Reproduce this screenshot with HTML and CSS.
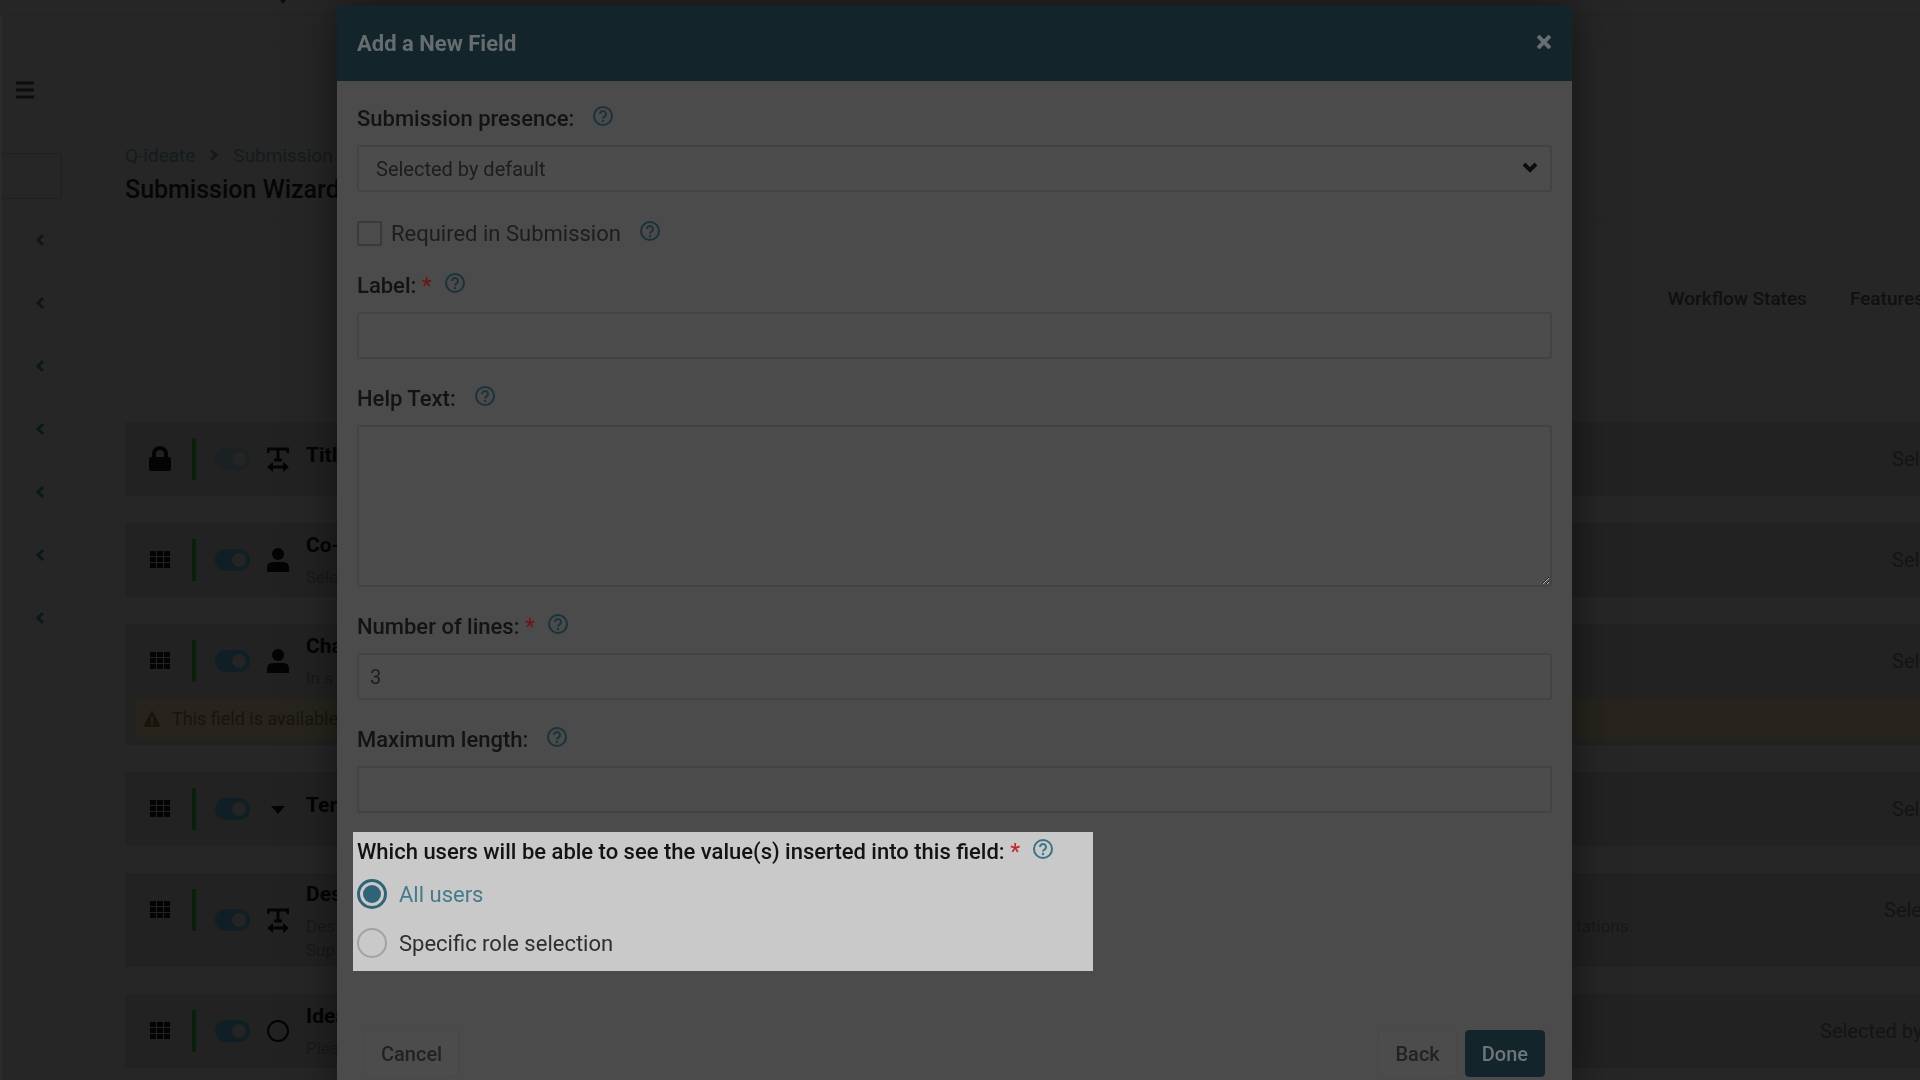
FILE: index.html
```html
<!DOCTYPE html>
<html lang="en">
  <head>
    <meta charset="UTF-8" />
    <meta name="viewport" content="width=device-width, initial-scale=1.0" />
    <link rel="stylesheet" href="styles.css">
    <title>Submission Wizard</title>
  </head>
  <body>
    <!-- shared icons -->
    <svg class="sprite" aria-hidden="true">
      <symbol id="help" viewBox="0 0 22 22">
        <circle cx="11" cy="11" r="9" fill="none" stroke="currentColor" stroke-width="2" />
        <path d="M8 9a3 3 0 1 1 4.500 2.600c-1 .6-1.500 1-1.500 2" fill="none" stroke="currentColor" stroke-width="2" />
        <circle cx="11" cy="16" r="1.200" fill="currentColor" />
      </symbol>
      <symbol id="chevron-left" viewBox="0 0 10 14">
        <path d="M8 2 3 7l5 5" fill="none" stroke="currentColor" stroke-width="3" />
      </symbol>
      <symbol id="grid" viewBox="0 0 22 20">
        <path d="M1 1h6v5H1zM8 1h6v5H8zM15 1h6v5h-6zM1 7h6v5H1zM8 7h6v5H8zM15 7h6v5h-6zM1 13h6v5H1zM8 13h6v5H8zM15 13h6v5h-6z" fill="currentColor" />
      </symbol>
      <symbol id="user" viewBox="0 0 22 26">
        <circle cx="11" cy="7" r="6" fill="currentColor" />
        <path d="M0 25v-4q0-6 6-6h10q6 0 6 6v4z" fill="currentColor" />
      </symbol>
      <symbol id="text-width" viewBox="0 0 22 24">
        <path d="M1 6V2h20v4M11 2v11M7 13h8M4 20h14" fill="none" stroke="currentColor" stroke-width="3" />
        <path d="M0 20l6-5v10zM22 20l-6-5v10z" fill="currentColor" />
      </symbol>
      <symbol id="lock" viewBox="0 0 22 26">
        <path d="M5 12V8a6 6 0 0 1 12 0v4" fill="none" stroke="currentColor" stroke-width="4" />
        <rect y="11" width="22" height="14" rx="2" fill="currentColor" />
      </symbol>
    </svg>

    <header class="topbar">
      <svg class="topbar-caret" viewBox="0 0 8 4"><path d="M1 0h6L4 4z" fill="currentColor" /></svg>
    </header>

    <div class="page">
      <aside class="sidebar">
        <button class="menu-button" aria-label="Menu">
          <svg width="18" height="18" viewBox="0 0 18 18"><path d="M0 2h18M0 9h18M0 16h18" stroke="currentColor" stroke-width="3" /></svg>
        </button>
        <input class="side-search" type="search" aria-label="Search" />
        <nav class="side-nav">
          <a href="#" aria-label="Expand"><svg><use href="#chevron-left" /></svg></a>
          <a href="#" aria-label="Expand"><svg><use href="#chevron-left" /></svg></a>
          <a href="#" aria-label="Expand"><svg><use href="#chevron-left" /></svg></a>
          <a href="#" aria-label="Expand"><svg><use href="#chevron-left" /></svg></a>
          <a href="#" aria-label="Expand"><svg><use href="#chevron-left" /></svg></a>
          <a href="#" aria-label="Expand"><svg><use href="#chevron-left" /></svg></a>
          <a href="#" aria-label="Expand"><svg><use href="#chevron-left" /></svg></a>
        </nav>
      </aside>

      <main class="content">
        <div class="breadcrumb">
          <a href="#">Q-ideate</a>
          <svg width="10" height="14" viewBox="0 0 10 14"><path d="M2 2l5 5-5 5" fill="none" stroke="currentColor" stroke-width="3" /></svg>
          <a href="#">Submission</a>
        </div>
        <h1>Submission Wizard</h1>
        <nav class="tabs">
          <a href="#">Workflow States</a>
          <a href="#">Features</a>
        </nav>

        <section class="card">
          <div class="row">
            <svg class="handle lock"><use href="#lock" /></svg>
            <span class="bar"></span>
            <span class="toggle off"></span>
            <svg class="type"><use href="#text-width" /></svg>
            <div class="info single"><h2>Title</h2></div>
            <span class="state">Selected</span>
          </div>
        </section>

        <section class="card">
          <div class="row">
            <svg class="handle"><use href="#grid" /></svg>
            <span class="bar"></span>
            <span class="toggle"></span>
            <svg class="type"><use href="#user" /></svg>
            <div class="info"><h2>Co-</h2><p>Sele</p></div>
            <span class="state">Selected</span>
          </div>
        </section>

        <section class="card">
          <div class="row">
            <svg class="handle"><use href="#grid" /></svg>
            <span class="bar"></span>
            <span class="toggle"></span>
            <svg class="type"><use href="#user" /></svg>
            <div class="info"><h2>Cha</h2><p>In s</p></div>
            <span class="state">Selected</span>
          </div>
          <div class="warning">
            <svg width="18" height="17" viewBox="0 0 18 17"><path fill-rule="evenodd" d="M9 0l9 17H0zM8 6v6h2V6zM8 13v2h2v-2z" fill="currentColor" /></svg>
            This field is available p
          </div>
        </section>

        <section class="card">
          <div class="row">
            <svg class="handle"><use href="#grid" /></svg>
            <span class="bar"></span>
            <span class="toggle"></span>
            <svg class="type" viewBox="0 0 22 26"><path d="M4 10h14l-7 8z" fill="currentColor" /></svg>
            <div class="info single"><h2>Ter</h2></div>
            <span class="state">Selected</span>
          </div>
        </section>

        <section class="card">
          <div class="row tall">
            <svg class="handle"><use href="#grid" /></svg>
            <span class="bar"></span>
            <span class="toggle"></span>
            <svg class="type"><use href="#text-width" /></svg>
            <div class="info">
              <h2>Des</h2>
              <p class="split"><span>Des</span><span>tations.</span></p>
              <p>Sup</p>
            </div>
            <span class="state">Selected</span>
          </div>
        </section>

        <section class="card">
          <div class="row">
            <svg class="handle"><use href="#grid" /></svg>
            <span class="bar"></span>
            <span class="toggle"></span>
            <svg class="type" viewBox="0 0 22 26"><circle cx="11" cy="13" r="10" fill="none" stroke="currentColor" stroke-width="2" /></svg>
            <div class="info"><h2>Idea</h2><p>Plea</p></div>
            <span class="state wide">Selected by</span>
          </div>
        </section>
      </main>
    </div>

    <div class="overlay">
      <form class="modal" role="dialog" aria-labelledby="modal-title">
        <div class="modal-header">
          <h2 id="modal-title">Add a New Field</h2>
          <button type="button" class="close" aria-label="Close">
            <svg width="14" height="14" viewBox="0 0 14 14"><path d="M1 1l12 12M13 1 1 13" stroke="currentColor" stroke-width="4" /></svg>
          </button>
        </div>

        <div class="modal-body">
          <div class="group">
            <div class="label-row">
              <label for="presence">Submission presence:</label>
              <svg class="help"><use href="#help" /></svg>
            </div>
            <div class="select-wrap">
              <select id="presence"><option>Selected by default</option></select>
              <svg class="arrow" viewBox="0 0 16 12"><path d="M2 2l6 6 6-6" fill="none" stroke="currentColor" stroke-width="4" /></svg>
            </div>
          </div>

          <div class="label-row required">
            <input type="checkbox" id="required" />
            <label for="required">Required in Submission</label>
            <svg class="help"><use href="#help" /></svg>
          </div>

          <div class="group">
            <div class="label-row">
              <label for="label">Label: <b>*</b></label>
              <svg class="help near"><use href="#help" /></svg>
            </div>
            <input type="text" id="label" />
          </div>

          <div class="group">
            <div class="label-row">
              <label for="help-text">Help Text:</label>
              <svg class="help"><use href="#help" /></svg>
            </div>
            <textarea id="help-text"></textarea>
          </div>

          <div class="group">
            <div class="label-row">
              <label for="lines">Number of lines: <b>*</b></label>
              <svg class="help near"><use href="#help" /></svg>
            </div>
            <input type="text" id="lines" value="3" />
          </div>

          <div class="group">
            <div class="label-row">
              <label for="max">Maximum length:</label>
              <svg class="help"><use href="#help" /></svg>
            </div>
            <input type="text" id="max" />
          </div>

          <div class="visibility" role="radiogroup" aria-labelledby="who">
            <div class="label-row">
              <span id="who">Which users will be able to see the value(s) inserted into this field: <b>*</b></span>
              <svg class="help near"><use href="#help" /></svg>
            </div>
            <label class="choice checked"><input type="radio" name="who" checked /> All users</label>
            <label class="choice"><input type="radio" name="who" /> Specific role selection</label>
          </div>

          <div class="actions">
            <button type="button" class="button cancel">Cancel</button>
            <button type="button" class="button">Back</button>
            <button type="button" class="button done">Done</button>
          </div>
        </div>
      </form>
    </div>
  </body>
</html>
```
FILE: styles.css
```css
* {
  box-sizing: border-box;
}

body {
  margin: 0;
  height: 100vh;
  overflow: hidden;
  font-family: Roboto, sans-serif;
  font-size: 22px;
  color: #131313;
  background-color: #262626;
}

a {
  color: inherit;
  text-decoration: none;
}

h1,
h2,
p {
  margin: 0;
}

.sprite {
  display: none;
}

/* page behind the dialog */
.topbar {
  height: 15px;
  padding-left: 279px;
  border-bottom: 1px solid #222;
}

.topbar-caret {
  display: block;
  width: 8px;
  height: 4px;
  color: #0c0c0c;
}

.page {
  display: flex;
}

.sidebar {
  width: 66px;
  flex: none;
  padding-top: 55px;
  border-left: 2px solid #2b2b2b;
}

.menu-button {
  display: block;
  width: 46px;
  height: 42px;
  padding: 0 0 0 14px;
  text-align: left;
  color: #0d0d0d;
  background: none;
  border: 1px solid #252525;
  border-left: 0;
}

.side-search {
  appearance: none;
  display: block;
  width: 60px;
  height: 46px;
  margin-top: 41px;
  background: none;
  border: 1px solid #202020;
  border-left: 0;
  border-radius: 0;
}

.side-nav {
  display: flex;
  flex-direction: column;
  gap: 49px;
  margin: 34px 0 0 33px;
  color: #0c171b;
}

.side-nav svg {
  display: block;
  width: 10px;
  height: 14px;
}

.content {
  flex: 1;
  min-width: 0;
  margin: 25px 0 0 31px;
  padding: 102px 0 0 27px;
  border-top: 1px solid #242424;
  border-left: 1px solid #252525;
}

.breadcrumb {
  display: flex;
  align-items: center;
  gap: 14px;
  height: 24px;
  font-size: 19px;
  color: #141b1e;
}

h1 {
  height: 54px;
  padding-top: 9px;
  font-size: 25px;
  font-weight: 500;
  line-height: 28px;
  color: #060606;
  border-bottom: 1px solid #242424;
}

.tabs {
  display: flex;
  justify-content: flex-end;
  gap: 43px;
  height: 201px;
  padding-top: 66px;
  margin-right: -4px;
  font-size: 19px;
  font-weight: 500;
  line-height: 24px;
  color: #101010;
}

.card {
  margin-bottom: 27px;
  background-color: #222;
}

.row {
  display: flex;
  align-items: center;
  min-height: 74px;
  padding-left: 24px;
  color: #040404;
}

.handle {
  width: 22px;
  height: 20px;
}

.lock {
  height: 26px;
}

.bar {
  width: 4px;
  height: 42px;
  margin: 0 19px 0 21px;
  background-color: #0a200b;
}

.toggle {
  display: flex;
  justify-content: flex-end;
  width: 35px;
  height: 22px;
  padding: 4px;
  border-radius: 11px;
  background-color: #0f1f25;
}

.toggle::after {
  content: "";
  width: 14px;
  height: 14px;
  border-radius: 50%;
  background-color: #242424;
}

.off {
  background-color: #1b2123;
}

.type {
  width: 22px;
  height: 26px;
  margin: 0 17px 0 17px;
}

.info {
  flex: 1;
  padding-bottom: 3px;
}

.info h2 {
  font-size: 21px;
  font-weight: 700;
  line-height: 36px;
}

.info p {
  font-size: 17px;
  line-height: 28px;
  color: #191919;
}

.info p + p {
  margin-top: -4px;
}

.single {
  padding-bottom: 8px;
}

.state {
  width: 28px;
  font-size: 20px;
  white-space: nowrap;
  color: #141414;
}

.wide {
  width: 100px;
}

.tall {
  min-height: 94px;
}

.tall .info {
  padding-bottom: 0;
}

.tall .handle {
  align-self: flex-start;
  margin-top: 27px;
}

.tall .bar {
  align-self: flex-start;
  margin-top: 16px;
}

.tall .state {
  align-self: flex-start;
  width: 36px;
  margin-top: 25px;
}

.split {
  display: flex;
  justify-content: space-between;
  padding-right: 251px;
}

.warning {
  display: flex;
  align-items: center;
  gap: 11px;
  height: 41px;
  margin-left: 10px;
  padding-left: 8px;
  font-size: 18px;
  color: #18150b;
  background-color: #26241d;
  border-radius: 3px;
}

.card:has(.warning) {
  padding-bottom: 6px;
}

/* dialog */
.overlay {
  position: fixed;
  inset: 0;
  padding: 6px 348px 0 337px;
}

.modal {
  min-height: 100%;
  background-color: #4b4b4b;
  box-shadow: 0 0 40px rgba(0, 0, 0, 0.5);
}

.modal-header {
  display: flex;
  align-items: center;
  justify-content: space-between;
  height: 75px;
  padding: 0 20px;
  color: #656d70;
  background-color: #14242b;
}

.modal-header h2 {
  font-size: 22px;
  font-weight: 700;
}

.close {
  height: 18px;
  padding: 0 1px 4px 0;
  color: inherit;
  background: none;
  border: 0;
}

.close svg {
  display: block;
}

.modal-body {
  padding: 23px 20px 20px;
}

.group {
  margin-bottom: 25px;
}

.label-row {
  display: flex;
  align-items: center;
  height: 28px;
  margin-bottom: 13px;
  font-weight: 500;
}

.label-row b {
  font-weight: 500;
  color: #6e1515;
}

.help {
  width: 22px;
  height: 22px;
  margin: 0 0 4px 18px;
  color: #1b323b;
}

.near {
  margin-left: 12px;
}

select,
input[type="text"],
textarea {
  display: block;
  width: 100%;
  height: 47px;
  padding: 0 11px;
  font: inherit;
  font-size: 20px;
  color: #1d1d1d;
  background-color: #4c4c4c;
  border: 2px solid #434343;
  border-radius: 3px;
}

select {
  appearance: none;
  padding: 0 17px;
}

textarea {
  height: 162px;
}

.select-wrap {
  position: relative;
}

.arrow {
  position: absolute;
  right: 14px;
  top: 17px;
  width: 16px;
  height: 12px;
  color: #0c0c0c;
  pointer-events: none;
}

.required {
  margin: 27px 0 24px;
  font-weight: 400;
  color: #1d1d1d;
}

.required input {
  appearance: none;
  width: 25px;
  height: 25px;
  margin: 0 9px 0 0;
  border: 2px solid #3a3a3a;
  border-radius: 2px;
}

.visibility {
  width: 740px;
  max-width: 100%;
  margin: -6px -4px 0;
  padding: 5px 4px 13px;
  background-color: #c9c9c9;
}

.visibility .label-row {
  margin-bottom: 14px;
}

.visibility .label-row b {
  color: #c22a2a;
}

.visibility .help {
  color: #3a7389;
}

.choice {
  display: flex;
  align-items: center;
  gap: 12px;
  height: 30px;
  color: #2e2e2e;
}

.choice + .choice {
  margin-top: 19px;
}

.checked {
  color: #477a8d;
}

.choice input {
  appearance: none;
  width: 30px;
  height: 30px;
  margin: 0;
  border: 2px solid #a2a2a2;
  border-radius: 50%;
}

.choice input:checked {
  border: 3px solid #306378;
  background: #306378 content-box;
  padding: 3px;
}

.actions {
  display: flex;
  gap: 8px;
  margin-top: 59px;
  padding: 0 7px;
}

.button {
  height: 47px;
  padding: 0 16px;
  font: inherit;
  font-size: 20px;
  font-weight: 500;
  color: #222;
  background-color: #4c4c4c;
  border: 1px solid #484848;
  border-radius: 4px;
}

.cancel {
  margin-right: auto;
}

.done {
  color: #6d7679;
  background-color: #14242b;
  border-color: #14242b;
}
```
